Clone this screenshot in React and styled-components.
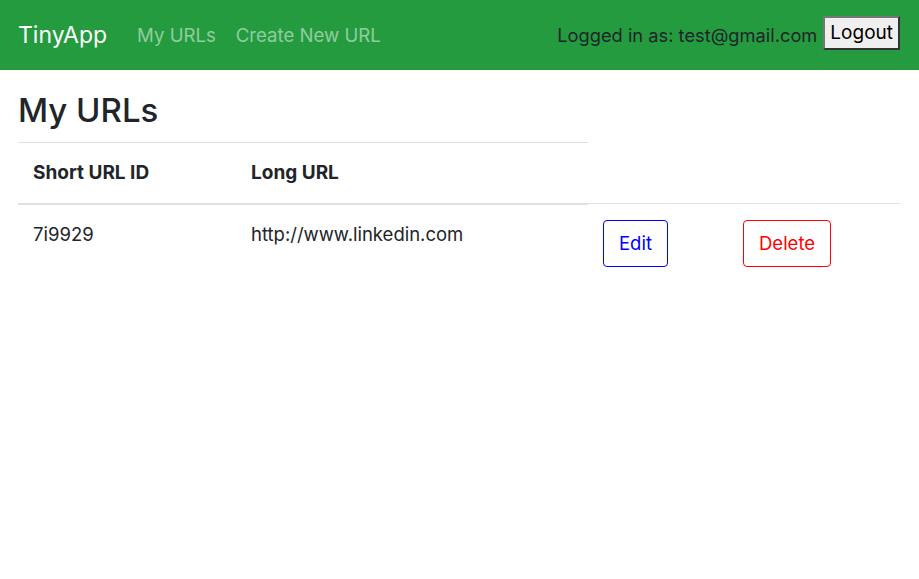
import React from 'react';
import styled, { createGlobalStyle } from 'styled-components';

const GlobalStyle = createGlobalStyle`
  body {
    margin: 0;
    font-family: Inter, "Liberation Sans", Arial, sans-serif;
    color: #212529;
    background: #fff;
  }
`;

const rows = [
  { id: '7i9929', longURL: 'http://www.linkedin.com' },
];

const App = () => {
  return (
    <>
      <GlobalStyle />
      <Navbar>
        <Brand href="#">TinyApp</Brand>
        <NavLinks>
          <NavLink href="#">My URLs</NavLink>
          <NavLink href="#">Create New URL</NavLink>
        </NavLinks>
        <UserArea>
          <span>Logged in as: test@gmail.com</span>
          <LogoutButton type="button">Logout</LogoutButton>
        </UserArea>
      </Navbar>
      <Main>
        <Title>My URLs</Title>
        <Table>
          <thead>
            <tr>
              <Th $w={218}>Short URL ID</Th>
              <Th $w={352}>Long URL</Th>
            </tr>
          </thead>
          <tbody>
            {rows.map((row) => (
              <tr key={row.id}>
                <Td>{row.id}</Td>
                <Td>{row.longURL}</Td>
                <Td $w={140}>
                  <ActionButton $color="#0000ff">Edit</ActionButton>
                </Td>
                <Td>
                  <ActionButton $color="#ff0000">Delete</ActionButton>
                </Td>
              </tr>
            ))}
          </tbody>
        </Table>
      </Main>
    </>
  );
};

const Navbar = styled.nav`
  display: flex;
  align-items: center;
  height: 70px;
  padding: 0 19px 0 18px;
  background-color: #239b3e;
  box-sizing: border-box;
`;

const Brand = styled.a`
  color: #fff;
  font-size: 23px;
  text-decoration: none;
  margin-right: 30px;
`;

const NavLinks = styled.div`
  display: flex;
  gap: 20px;
`;

const NavLink = styled.a`
  color: rgba(255, 255, 255, 0.5);
  font-size: 18.6px;
  text-decoration: none;
`;

const UserArea = styled.div`
  margin-left: auto;
  display: flex;
  align-items: center;
  gap: 6px;
  font-size: 18.3px;
  color: #212529;
`;

const LogoutButton = styled.button`
  font-family: inherit;
  font-size: 19px;
  color: #000;
  background: #efefef;
  border: 2px solid #333;
  border-top-color: #767676;
  border-left-color: #767676;
  padding: 3px 5px;
  height: 34px;
  margin-top: -5px;
`;

const Main = styled.main`
  padding: 0 19px 0 18px;
`;

const Title = styled.h2`
  font-size: 33px;
  font-weight: 500;
  line-height: 1.2;
  margin: 21px 0 11px;
`;

const Table = styled.table`
  width: 100%;
  border-collapse: collapse;
  font-size: 18.5px;

  thead th {
    border-bottom: 2px solid #dee2e6;
  }
`;

const Th = styled.th`
  width: ${(p) => (p.$w ? `${p.$w}px` : 'auto')};
  text-align: left;
  font-weight: 700;
  font-size: 19px;
  padding: 16px 15px 17px;
  line-height: 27px;
  border-top: 1px solid #dee2e6;
  box-sizing: border-box;
`;

const Td = styled.td`
  width: ${(p) => (p.$w ? `${p.$w}px` : 'auto')};
  vertical-align: top;
  padding: 16px 15px;
  line-height: 27px;
  border-top: 1px solid #dee2e6;
  box-sizing: border-box;
`;

const ActionButton = styled.button`
  font-family: inherit;
  font-size: 18.5px;
  line-height: 27px;
  padding: 9px 15px;
  background: #fff;
  color: ${(p) => p.$color};
  border: 1px solid ${(p) => p.$color};
  border-radius: 4px;
  cursor: pointer;
`;

export default App;
